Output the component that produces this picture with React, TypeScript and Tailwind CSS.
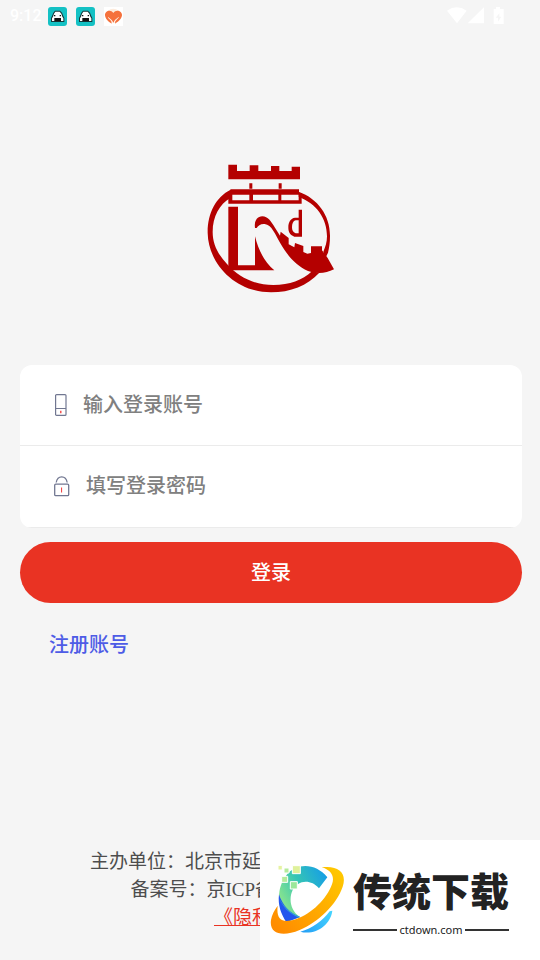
import React, { useState } from 'react';

function AppBadge() {
  return (
    <svg viewBox="0 0 57 57" className="h-[19px] w-[19px]" aria-hidden="true">
      <rect width="57" height="57" rx="9" fill="#14c1c4" />
      <path d="M21 11h15l6 6 4 10 3 6v12H9V33l3-6 4-10z" fill="#17383b" />
      <path d="M22 14h13l5 6 3 9 3 5v8H12v-8l3-5 3-9z" fill="#fff" />
      <path d="M19 33h20v10H19zM18 24h4v4h-4zM35 24h4v4h-4z" fill="#111" />
    </svg>
  );
}

function StatusBar() {
  return (
    <header className="flex h-8 items-center justify-between pl-[10px] pr-[35px] text-white">
      <div className="flex items-center gap-[9px]">
        <span className="w-[29px] font-[Roboto,sans-serif] text-base font-medium leading-8">9:12</span>
        <AppBadge />
        <AppBadge />
        <svg viewBox="0 0 57 57" className="h-[19px] w-[19px]" aria-hidden="true">
          <rect width="57" height="57" fill="#fff" />
          <circle cx="28" cy="27" r="22" fill="#fdebdc" />
          <path d="M28 18C20 6 2 12 3 25c1 11 10 19 20 25l-1-7-11-12 12 9 5 8 5-8 12-9-11 12-1 7c10-6 20-14 21-25C55 12 36 6 28 18z" fill="#f5713c" />
          <path d="M12 31l11 9 4 9M44 31l-11 9-4 9" stroke="#fff" strokeWidth="2" fill="none" />
        </svg>
      </div>
      <svg viewBox="0 0 174 54" className="h-[18px] w-[58px]" fill="currentColor" aria-hidden="true">
        <path d="M0 11Q29-9 59 11L30 49z" />
        <path d="M111 1v48H62z" />
        <path d="M147 0h12v6h11v45h-30V6h7zM157 19l-11 13h7v12l10-15h-6z" fillRule="evenodd" />
      </svg>
    </header>
  );
}

function Logo() {
  return (
    <svg viewBox="18 25 390 390" className="h-[130px] w-[130px]" fill="#b40000" role="img" aria-label="Logo">
      <path d="M85 30h26v19h38V32h26v17h38V34h25v15h37V36h25v38H85z" />
      <path d="M148 86h9v16h-9zM236 86h9v16h-9z" />
      <path
        fillRule="evenodd"
        d="M92 104h205v12h8v31H85v-31zM97 120v17h51v-17zM159 120v17h76v-17zM244 120v17h52v-17z"
      />
      <path d="M92 105C47 127 22 177 23 235c2 93 83 178 190 178 58 0 109-20 145-59l-22-4c-30 27-66 41-116 41-56 0-104-23-139-63C53 298 38 268 38 232c0-47 21-83 52-101z" />
      <path d="M296 111c58 21 95 72 94 134 0 18-2 34-6 49l-8 17-6-20c6-14 11-28 11-46 0-55-32-98-85-119z" />
      <path d="M85 156h29v176h51v-87c10 40 27 76 58 102H85z" />
      <path d="M165 220c-3-20 6-35 22-35 17 0 26 15 38 34l15 24 2-12 24 19v19l17 9 2-13 25 9v18l12 5 11-2v-20h33v12l17 23 19 34c-24 13-54 14-78 5-37-17-60-44-83-83-15-26-26-56-47-58-12-1-20 5-24 12z" />
      <path d="M296 165h10v81h-23c-15-5-18-16-18-28 0-15 7-28 20-29h11zm0 32h-9c-8 2-11 10-11 21 0 9 3 15 11 18h9z" fillRule="evenodd" />
    </svg>
  );
}

function PhoneIcon() {
  return (
    <svg viewBox="0 0 12 22" className="h-[22px] w-3" fill="none" aria-hidden="true">
      <rect x=".6" y=".6" width="10.4" height="20.8" rx="1" stroke="#717791" strokeWidth="1.2" />
      <path d="M.6 14.5H11" stroke="#717791" strokeWidth="1.2" />
      <path d="M5.8 16.8v2.4" stroke="#f23535" strokeWidth="1.3" />
    </svg>
  );
}

function LockIcon() {
  return (
    <svg viewBox="0 0 16 21" className="h-[21px] w-4" fill="none" aria-hidden="true">
      <rect x=".7" y="8.2" width="14" height="11.5" rx="1" stroke="#717791" strokeWidth="1.3" />
      <path d="M2.2 6.5C3.6-.9 11.8-.9 13.2 6.5" stroke="#717791" strokeWidth="1.3" />
      <path d="M7.6 11.5v5" stroke="#f23535" strokeWidth="1" />
    </svg>
  );
}

function DownloadBanner() {
  return (
    <aside className="absolute bottom-0 right-0 flex h-[120px] w-[280px] items-start bg-white pl-[10px] pt-6 font-['Noto_Sans_CJK_SC',sans-serif] text-[#222]">
      <svg viewBox="28 87 222 213" className="h-[71px] w-[74px] shrink-0" aria-hidden="true">
        <defs>
          <linearGradient id="arc" x1="55" y1="190" x2="200" y2="115" gradientUnits="userSpaceOnUse">
            <stop offset="0" stopColor="#8be58d" />
            <stop offset="0.45" stopColor="#35c5b4" />
            <stop offset="1" stopColor="#159de8" />
          </linearGradient>
          <linearGradient id="ring" x1="50" y1="280" x2="235" y2="110" gradientUnits="userSpaceOnUse">
            <stop offset="0" stopColor="#ff8c00" />
            <stop offset="1" stopColor="#ffc700" />
          </linearGradient>
          <linearGradient id="tail" x1="120" y1="290" x2="215" y2="230" gradientUnits="userSpaceOnUse">
            <stop offset="0" stopColor="#249df5" />
            <stop offset="1" stopColor="#46d5ff" />
          </linearGradient>
        </defs>
        <path d="M200 127C165 84 108 82 76 122C46 162 50 215 78 261L118 246C88 226 84 190 96 165C110 136 150 130 175 160Z" fill="url(#arc)" />
        <path d="M55 178c-4 32 6 59 22 84l41-16c-31-11-53-36-63-68z" fill="#2456ed" />
        <path d="M56 190c9 26 30 46 58 58l4-2c-28-10-50-30-62-56z" fill="#36a9d4" />
        <path
          d="M183 97c50-7 77 17 63 58-18 54-74 107-129 130-53 22-92 11-86-30 2-15 10-29 20-43-5 43 14 54 54 41 49-17 93-61 109-105 9-25-3-43-31-51z"
          fill="url(#ring)"
        />
        <path d="M119 290c36-9 67-33 88-61l8-2c-5 43-51 75-96 63z" fill="url(#tail)" />
        <g stroke="#fff" strokeWidth="3">
          <path d="M95 92h24v24H95z" fill="#dff19b" />
          <path d="M70 99h15v15H70z" fill="#b5eb9b" />
          <path d="M63 124h18v18H63z" fill="#b5eb9b" />
          <path d="M89 140h21v22H89z" fill="#9be79a" />
          <path d="M52 91h13v14H52z" fill="#e6f3a2" />
        </g>
      </svg>
      <div className="ml-[9px] w-[156px]">
        <p className="whitespace-nowrap text-[39px] font-black leading-[50px]">传统下载</p>
        <div className="mt-[10px] flex items-center gap-[2px]">
          <span className="h-[2px] flex-1 bg-[#333]" />
          <span className="font-['Noto_Sans',sans-serif] text-[11px] leading-3">ctdown.com</span>
          <span className="h-[2px] flex-1 bg-[#333]" />
        </div>
      </div>
    </aside>
  );
}

export default function App() {
  const [account, setAccount] = useState('');
  const [password, setPassword] = useState('');

  return (
    <div className="relative flex min-h-screen flex-col overflow-hidden bg-[#f5f5f5] font-['Liberation_Serif','Noto_Sans_CJK_SC',serif] text-xl">
      <StatusBar />

      <main className="flex flex-col pl-5 pr-[18px]">
        <div className="mb-[72px] mt-[131px] flex justify-center">
          <Logo />
        </div>

        <form onSubmit={(e) => e.preventDefault()}>
          <div className="overflow-hidden rounded-xl bg-white font-medium">
            <label className="flex h-[81px] items-center border-b border-[#ebebeb] pl-[35px] pr-5">
              <PhoneIcon />
              <input
                type="text"
                aria-label="登录账号"
                placeholder="输入登录账号"
                className="ml-4 h-10 min-w-0 flex-1 bg-transparent outline-none placeholder:text-[#808080]"
                value={account}
                onChange={(e) => setAccount(e.target.value)}
              />
            </label>
            <label className="flex h-[82px] items-center border-b border-[#ebebeb] pl-[34px] pr-5">
              <LockIcon />
              <input
                type="password"
                aria-label="登录密码"
                placeholder="填写登录密码"
                className="ml-4 h-10 min-w-0 flex-1 bg-transparent outline-none placeholder:text-[#808080]"
                value={password}
                onChange={(e) => setPassword(e.target.value)}
              />
            </label>
          </div>

          <button type="submit" className="mt-[14px] h-[61px] w-full rounded-full bg-[#e93323] font-medium text-white">
            登录
          </button>
        </form>

        <a href="#register" className="ml-[29px] mt-[26px] self-start font-medium leading-8 text-[#4e5ce6]">
          注册账号
        </a>
      </main>

      <footer className="mt-auto whitespace-nowrap pb-7 pl-5 pr-[18px] text-[19px] leading-7 text-[#4d4d4d]">
        <p className="mx-auto w-[362px]">主办单位：北京市延</p>
        <p className="mx-auto w-[281px]">备案号：京ICP备</p>
        <p className="text-center">
          <a href="#privacy" className="text-[#e93323] underline">《隐私政策》</a>
        </p>
      </footer>

      <DownloadBanner />
    </div>
  );
}
